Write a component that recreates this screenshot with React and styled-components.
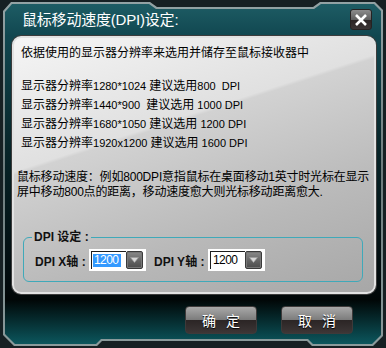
import React from 'react';
import styled, { createGlobalStyle } from 'styled-components';

const GlobalStyle = createGlobalStyle`
  html, body {
    margin: 0;
    padding: 0;
    background: #162023;
  }
  body {
    width: 386px;
    height: 348px;
    overflow: hidden;
    font-family: "Liberation Sans", "Noto Sans CJK SC", sans-serif;
  }
`;

const Frame = styled.div`
  width: 386px;
  height: 348px;
  background: linear-gradient(180deg, #93a3a5 0%, #6c7b7c 50%, #8b9b9c 100%);
  clip-path: polygon(3px 11px, 11px 2px, 150px 2px, 157px 7px, 313px 7px, 320px 2px, 375px 2px, 383px 10px, 383px 336px, 373px 346px, 312px 346px, 307px 341px, 102px 341px, 97px 346px, 14px 346px, 3px 335px);
`;

const Shell = styled.div`
  width: 100%;
  height: 100%;
  display: flex;
  flex-direction: column;
  background: linear-gradient(180deg, #1f5f67 0px, #114750 36px, #082529 150px, #020a0c 285px, #010707 300px, #0c5a61 346px);
  clip-path: polygon(5px 12px, 12px 4px, 149px 4px, 156px 9px, 314px 9px, 321px 4px, 374px 4px, 381px 11px, 381px 335px, 372px 344px, 313px 344px, 308px 339px, 101px 339px, 96px 344px, 15px 344px, 5px 334px);
`;

const TitleBar = styled.div`
  height: 36px;
  box-sizing: border-box;
  padding: 3px 14px 0 22px;
  display: flex;
  align-items: center;
  justify-content: space-between;
`;

const Title = styled.div`
  color: #fff;
  font-size: 15px;
  line-height: 18px;
  letter-spacing: -0.2px;
`;

const CloseButton = styled.button`
  width: 22px;
  height: 21px;
  padding: 0;
  box-sizing: border-box;
  border: 1px solid #262222;
  border-radius: 3px;
  background: linear-gradient(180deg, #8c8c8c 0%, #5f5f5f 50%, #2a2424 51%, #3b3434 100%);
  display: flex;
  align-items: center;
  justify-content: center;
`;

const Panel = styled.div`
  margin: 0 10px 0 12px;
  height: 258px;
  box-sizing: border-box;
  border: 2px solid #e2e2e2;
  border-radius: 9px;
  box-shadow: 0 0 0 1px #3c3c3c;
  padding: 6px 6px 0 7px;
  background: linear-gradient(162deg, #f5f5f5 0%, #e0e0e0 36%, #d2d2d2 37%, #b9b9b9 70%, #a7a7a7 100%);
  color: #000;
  font-size: 12px;
`;

const Intro = styled.div`
  line-height: 19px;
`;

const List = styled.div`
  margin-top: 14px;
`;

const Line = styled.div`
  line-height: 19px;
  white-space: pre;
`;

const Lat = styled.span`
  font-size: 11px;
`;

const Para = styled.div`
  margin: 17px 0 0 -4px;
  line-height: 15px;
  letter-spacing: -0.2px;
  white-space: nowrap;
`;

const Group = styled.fieldset`
  margin: 30px 5px 0 2px;
  min-width: 0;
  padding: 5px 0 10px 11px;
  border: 1px solid #3fa9b9;
  border-radius: 6px;
`;

const Legend = styled.legend`
  font-weight: bold;
  font-size: 12px;
  line-height: 14px;
  padding: 0 2px;
  margin-left: -3px;
  color: #111;
`;

const Row = styled.div`
  display: flex;
  align-items: center;
  height: 22px;
`;

const AxisLabel = styled.span`
  width: 54px;
  font-weight: bold;
  color: #111;
  white-space: pre;
`;

const Combo = styled.div`
  width: 57px;
  height: 22px;
  box-sizing: border-box;
  margin-right: 8px;
  padding: 2px 3px 2px 2px;
  background: #fff;
  display: flex;
`;

const ComboField = styled.div`
  flex: 1;
  border-top: 1px solid #1e1e1e;
  border-left: 1px solid #1e1e1e;
  display: flex;
  align-items: center;
  padding-left: 1px;
`;

const Value = styled.span`
  font-size: 12px;
  line-height: 13px;
  letter-spacing: -0.6px;
  padding: 0 3px 0 1px;
  color: ${(p) => (p.$selected ? '#fff' : '#000')};
  background: ${(p) => (p.$selected ? '#3399ff' : 'transparent')};
`;

const DropButton = styled.div`
  width: 17px;
  height: 18px;
  box-sizing: border-box;
  border: 1px solid #3a3a3a;
  border-radius: 2px;
  background: linear-gradient(180deg, #8a8a8a 0%, #606060 60%, #4c4c4c 100%);
  box-shadow: inset 0 0 0 1px #777;
  display: flex;
  align-items: center;
  justify-content: center;
`;

const Footer = styled.div`
  display: flex;
  justify-content: flex-end;
  gap: 24px;
  padding: 12px 33px 0 0;
`;

const ActionButton = styled.button`
  width: 72px;
  height: 28px;
  box-sizing: border-box;
  border: 1px solid #3e3a3a;
  border-radius: 4px;
  background: linear-gradient(180deg, #a9a9a9 0%, #7b7b7b 50%, #2b2525 51%, #3d3636 100%);
  color: #fff;
  font-family: "Noto Sans CJK SC", sans-serif;
  font-size: 14px;
  letter-spacing: 10px;
  padding: 0 0 0 10px;
  text-shadow: 0 1px 1px #000;
`;

const Triangle = () => (
  <svg width="9" height="6" viewBox="0 0 9 6">
    <polygon points="0.5,0.5 8.5,0.5 4.5,5.5" fill="#d6d6d6" stroke="#9a9a9a" strokeWidth="0.6" />
  </svg>
);

const CloseIcon = () => (
  <svg width="14" height="14" viewBox="0 0 14 14">
    <path d="M2 2 L12 12 M12 2 L2 12" stroke="#fff" strokeWidth="2.6" />
  </svg>
);

const AxisSelect = ({ value, selected }) => (
  <Combo>
    <ComboField>
      <Value $selected={selected}>{value}</Value>
    </ComboField>
    <DropButton>
      <Triangle />
    </DropButton>
  </Combo>
);

const rows = [
  ['1280*1024 ', '800  DPI', ''],
  ['1440*900  ', '1000 DPI', ' '],
  ['1680*1050 ', '1200 DPI', ' '],
  ['1920x1200 ', '1600 DPI', ' '],
];

export default function App() {
  return (
    <>
      <GlobalStyle />
      <Frame>
        <Shell>
          <TitleBar>
            <Title>鼠标移动速度(DPI)设定:</Title>
            <CloseButton aria-label="关闭">
              <CloseIcon />
            </CloseButton>
          </TitleBar>
          <Panel>
            <Intro>依据使用的显示器分辨率来选用并储存至鼠标接收器中</Intro>
            <List>
              {rows.map(([res, dpi, gap]) => (
                <Line key={res}>
                  显示器分辨率<Lat>{res}</Lat>建议选用<Lat>{gap}{dpi}</Lat>
                </Line>
              ))}
            </List>
            <Para>
              鼠标移动速度：例如800DPI意指鼠标在桌面移动1英寸时光标在显示
              <br />
              屏中移动800点的距离，移动速度愈大则光标移动距离愈大.
            </Para>
            <Group>
              <Legend>DPI 设定 :</Legend>
              <Row>
                <AxisLabel>DPI X轴 :</AxisLabel>
                <AxisSelect value="1200" selected />
                <AxisLabel>DPI Y轴 :</AxisLabel>
                <AxisSelect value="1200" />
              </Row>
            </Group>
          </Panel>
          <Footer>
            <ActionButton>确定</ActionButton>
            <ActionButton>取消</ActionButton>
          </Footer>
        </Shell>
      </Frame>
    </>
  );
}
